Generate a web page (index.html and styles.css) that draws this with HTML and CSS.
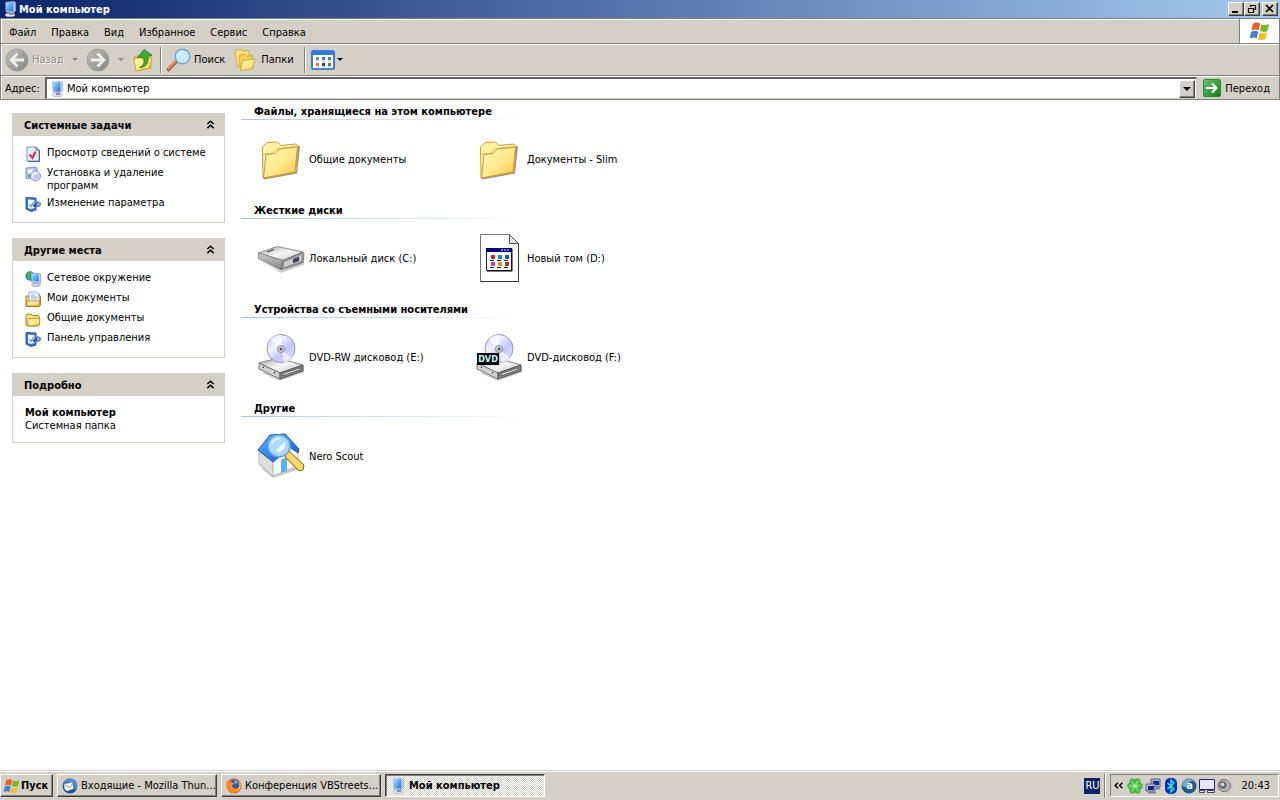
FILE: index.html
```html
<!DOCTYPE html>
<html lang="ru">
<head>
<meta charset="utf-8">
<title>Мой компьютер</title>
<link rel="stylesheet" href="styles.css">
</head>
<body>
<svg class="sprite" aria-hidden="true">
  <defs>
    <linearGradient id="g-screen" x1="0" y1="0" x2="1" y2="1"><stop offset="0" stop-color="#9be4ff"/><stop offset="1" stop-color="#1f6fe0"/></linearGradient>
    <linearGradient id="g-gray" x1="0" y1="0" x2="1" y2="1"><stop offset="0" stop-color="#c4c2bd"/><stop offset="1" stop-color="#85837f"/></linearGradient>
    <linearGradient id="g-folder" x1="0" y1="0" x2="1" y2="1"><stop offset="0" stop-color="#fff7b8"/><stop offset=".55" stop-color="#ffe98a"/><stop offset="1" stop-color="#f5bf3c"/></linearGradient>
    <linearGradient id="g-green" x1="0" y1="0" x2="1" y2="1"><stop offset="0" stop-color="#6cc46a"/><stop offset="1" stop-color="#0f7d1c"/></linearGradient>
    <linearGradient id="g-metal" x1="0" y1="0" x2="1" y2="1"><stop offset="0" stop-color="#a4a4a4"/><stop offset=".5" stop-color="#f6f6f6"/><stop offset="1" stop-color="#c4c4c4"/></linearGradient>
    <linearGradient id="g-side" x1="0" y1="0" x2="0" y2="1"><stop offset="0" stop-color="#d0d0d0"/><stop offset="1" stop-color="#808080"/></linearGradient>
    <linearGradient id="g-disc" x1="0" y1="0" x2="1" y2="1"><stop offset="0" stop-color="#c8c6f4"/><stop offset=".35" stop-color="#f0f2ff"/><stop offset=".6" stop-color="#c4c6f8"/><stop offset="1" stop-color="#e9e6fb"/></linearGradient>
    <linearGradient id="g-roof" x1="0" y1="0" x2="1" y2="1"><stop offset="0" stop-color="#62b4ff"/><stop offset="1" stop-color="#0b56c8"/></linearGradient>
    <linearGradient id="g-gold" x1="0" y1="1" x2="1" y2="0"><stop offset="0" stop-color="#b8740c"/><stop offset=".5" stop-color="#ffe070"/><stop offset="1" stop-color="#d89018"/></linearGradient>
  </defs>
  <symbol id="i-computer" viewBox="0 0 16 16">
    <ellipse cx="8" cy="14" rx="5" ry="1.800" fill="#e4e2f2" stroke="#a5a3c0" stroke-width=".6"/>
    <path d="M7 11h4v3H7z" fill="#8b8fb0"/>
    <path d="M3.500 1.200 11.600.2l2.100 1.400v8.200L11.500 12l-7.500-.8z" fill="#b4c6ea" stroke="#8c9fd0" stroke-width=".5"/>
    <path d="m4.200 2 7-.9v9.400l-6.700-.6z" fill="url(#g-screen)"/>
  </symbol>
  <symbol id="i-flag" viewBox="2 1 17 15">
    <path d="M4.500 2.500C7 .8 8.700 1.200 10.600 2.200L9.300 8C7.200 6.800 5.400 7 3.200 8.200z" fill="#ee5a24"/>
    <path d="M11.600 2.700c2.200 1 4.200 1 6.600-.2L16.800 8.500c-2.400 1.100-4.200 1-6.400.1z" fill="#79b928"/>
    <path d="M3 9.300c2.200-1.200 4-1.300 6-.2l-1.300 5.700c-2-1.200-3.900-1-6.100.2z" fill="#3f80dd"/>
    <path d="M10.100 9.700c2.200 1 4.100.9 6.500-.1l-1.400 5.800c-2.400 1.100-4.200 1.100-6.400.1z" fill="#f8bf1a"/>
  </symbol>
  <symbol id="i-back" viewBox="0 0 24 24">
    <circle cx="12" cy="12" r="11" fill="url(#g-gray)" stroke="#989690" stroke-width=".8"/>
    <path d="M12.500 5.500 6.200 12l6.300 6.500M6.500 12H19" fill="none" stroke="#f1f0ed" stroke-width="2.800"/>
  </symbol>
  <symbol id="i-forward" viewBox="0 0 24 24">
    <circle cx="12" cy="12" r="11" fill="url(#g-gray)" stroke="#989690" stroke-width=".8"/>
    <path d="M11.500 5.500 17.800 12l-6.300 6.500M17.500 12H5" fill="none" stroke="#f1f0ed" stroke-width="2.800"/>
  </symbol>
  <symbol id="i-up" viewBox="0 0 24 24">
    <path d="m3 10 1-1.500 5-.8 1.500 1.200 9-1 .5 12L5.500 23z" fill="#f1cf58" stroke="#c69a20" stroke-width=".8"/>
    <path d="m5 23-2-12 7-2 2 3 9-2.500L18.500 20z" fill="url(#g-folder)" stroke="#c69a20" stroke-width=".8"/>
    <path d="M8.500 19.500c4.500-1.500 5-5 4.300-10l-6.300.2L13 1.500l8 5.700-4 .9c.8 6.700-1.500 11.400-8.500 11.400z" fill="#3dad35" stroke="#1c7a1c" stroke-width=".8"/>
  </symbol>
  <symbol id="i-search" viewBox="0 0 24 24">
    <path d="m9.500 13-8 8.500" stroke="#a8583a" stroke-width="3.600" stroke-linecap="round"/><path d="m9 12.800-7.500 8" stroke="#e9a477" stroke-width="1.500" stroke-linecap="round"/>
    <circle cx="15.500" cy="8.500" r="7.300" fill="#c6eafd" stroke="#7b9dd3" stroke-width="1.400"/>
    <path d="M11 9.500c0-4 2.500-5.500 6-5-3 .8-4.500 2.500-6 5z" fill="#fff"/>
  </symbol>
  <symbol id="i-folders" viewBox="0 0 24 24">
    <path d="m2 4 1.200-2 5-.5L10 3.200l6-.7.700 13-12.500 3z" fill="#f8df7c" stroke="#caa032" stroke-width=".8"/>
    <path d="m6 9 1.200-2 5-.5L14 8.200l5.500-.7.700 12L7.500 22z" fill="#f3d05a" stroke="#caa032" stroke-width=".8"/>
    <path d="m7.500 22.500 2.200-9.700 12.300-2-2.500 10z" fill="url(#g-folder)" stroke="#caa032" stroke-width=".8"/>
  </symbol>
  <symbol id="i-views" viewBox="0 0 24 20">
    <rect x="1" y="1" width="22" height="18" rx="1" fill="#fff" stroke="#1260c8" stroke-width="1.600"/>
    <path d="M1 1h22v4H1z" fill="#2d7be2"/>
    <path d="M5 7h3v3H5z" fill="#8b8b98"/><path d="M11 7h3v3h-3z" fill="#4474d8"/><path d="M17 7h3v3h-3z" fill="#3d9148"/>
    <path d="M5 13h3v3H5z" fill="#e77838"/><path d="M11 13h3v3h-3z" fill="#273a9c"/><path d="M17 13h3v3h-3z" fill="#3a8f4a"/>
    <path d="M5 11h3M11 11h3M17 11h3M5 17h3M11 17h3M17 17h3" stroke="#999" stroke-width=".7"/>
  </symbol>
  <symbol id="i-go" viewBox="0 0 18 18">
    <rect x=".5" y=".5" width="17" height="17" rx="1" fill="url(#g-green)" stroke="#2c8a35"/>
    <path d="M3 9h10M9 4.500 13.500 9 9 13.500" fill="none" stroke="#fff" stroke-width="2"/>
  </symbol>
  <symbol id="i-chevrons" viewBox="0 0 8 8"><path d="m1.200 3.500 2.800-2.500 2.800 2.500M1.200 7.200l2.800-2.500 2.800 2.500" fill="none" stroke="#000" stroke-width="1.300"/></symbol>
  <symbol id="i-info" viewBox="0 0 16 16">
    <path d="M2 1h9l3 3v11H2z" fill="#e4eeff" stroke="#7c94c9"/><path d="M11 1v3h3M14.500 4v11.500H3" fill="none" stroke="#4d679d"/>
    <path d="m4.500 8.500 3 3.500 3-6.500" fill="none" stroke="#dd2d35" stroke-width="2"/>
  </symbol>
  <symbol id="i-install" viewBox="0 0 16 16">
    <path d="m1 2 9-1 2 1v9l-9 2-2-1z" fill="#b6c8ed" stroke="#6b82bb" stroke-width=".8"/><path d="M3 3.500h5v4H3z" fill="#f6fbff"/><path d="M3 8.500h3V11H3z" fill="#4ead54"/>
    <circle cx="10.500" cy="10" r="5" fill="url(#g-disc)" stroke="#8386bd" stroke-width=".8"/><circle cx="10.500" cy="10" r="1.300" fill="#fff" stroke="#8585b8" stroke-width=".6"/>
  </symbol>
  <symbol id="i-settings" viewBox="0 0 16 16">
    <path d="m1 1.500 10 .5v12l-5 1.500-5-2.500z" fill="#3b78cc" stroke="#173f85" stroke-width=".8"/><path d="m3 3.500 6.500.5v8L6 13l-3-1z" fill="#eaf5ff"/>
    <path d="m4.300 8 1.700 2.500L8.500 6" fill="none" stroke="#59a0dd" stroke-width="1.200"/><path d="m8 10 4-2" stroke="#244f91" stroke-width="2"/><path d="m12 5.500 3.500 1.500-.5 3-3.500.5z" fill="#8ab0e2" stroke="#315992" stroke-width=".8"/>
  </symbol>
  <symbol id="i-network" viewBox="0 0 16 16">
    <circle cx="5" cy="5" r="4.700" fill="#2b7fd8"/><path d="M1 3c2-3 4-2.500 6-2L5 4l2 3-3 2.500C2 8 2 5 1 3z" fill="#48ae45"/>
    <path d="m6 2 8.500.5 1.500 1-.5 8-2 1.500-7-2z" fill="#c3d1ed" stroke="#6a80b4" stroke-width=".6"/><path d="m6.700 3 7 .3v7.400l-6.500-1.200z" fill="url(#g-screen)"/>
    <ellipse cx="11" cy="14" rx="4.500" ry="1.700" fill="#d6d4ee" stroke="#8a89b6" stroke-width=".6"/>
  </symbol>
  <symbol id="i-mydocs" viewBox="0 0 16 16">
    <path d="M1 5h3l1-2h9l1.500 3v8l-1 1.500H1z" fill="#f6d26b" stroke="#ad8122"/><path d="M4 1h7l3 3v8H4z" fill="#f5faff" stroke="#7e99c5" stroke-width=".8"/>
    <path d="M6 4h4M6 6h6M6 8h6" stroke="#85aadb"/><path d="M2 10h13l-1 5H2z" fill="url(#g-folder)" stroke="#ad8122" stroke-width=".8"/>
  </symbol>
  <symbol id="i-shared" viewBox="0 0 16 16">
    <path d="M1 4.500 2 3h4l1.500 1.500H13L14.500 6v7.500L13 15H2.500L1 14z" fill="#f8df7c" stroke="#ad8122"/><path d="M3 15V7.500h12L14 14z" fill="url(#g-folder)" stroke="#b98d29" stroke-width=".8"/>
  </symbol>
  <symbol id="i-folder" viewBox="0 0 48 48">
    <path d="m7 44.500 33-6 3-27-2-1-2 26-33 6z" fill="#77736a" opacity=".8"/>
    <path d="m5.500 12 5-4.500 10-.5 3.500 3.500 15-1.500 2 2.500-2 26-33 5.500z" fill="#fff2a0" stroke="#c9a045"/>
    <path d="M6 19.500 15.500 18l4-4L39 11.500" fill="none" stroke="#e0bd5c"/>
    <path d="m6.500 43 2.500-23.500 9-1 4.500-4.500 18-2-2.500 25z" fill="url(#g-folder)" stroke="#c49b35"/>
  </symbol>
  <symbol id="i-drive" viewBox="0 0 48 48">
    <path d="m5 28 19 11 23-8v-4L24 37z" fill="#777" opacity=".35"/>
    <path d="m1.500 19 19-6.500L46 18l-20 8.500z" fill="url(#g-metal)" stroke="#8d8d8d"/>
    <path d="M1.500 19v5.500L24 36l2-9.500z" fill="url(#g-side)" stroke="#777" stroke-width=".8"/>
    <path d="M26 26.500 46 18l1 1.500-1 9L24 36z" fill="#97979c" stroke="#666" stroke-width=".8"/>
    <path d="m27.500 28 17-7-.5 6-17 6z" fill="#cbcbd0"/><path d="m36 25 6-2.500v4.500l-6 2.200z" fill="#45405f"/>
    <path d="m10 18 7-2.500" stroke="#444" stroke-width="1.300"/>
  </symbol>
  <symbol id="i-volume" viewBox="0 0 48 48">
    <path d="M5.500.5h29l9 9v38h-38z" fill="#fff" stroke="#777"/><path d="M34.500.5v9h9z" fill="#e5e5e5" stroke="#555"/><path d="M43.500 10v37.500H6" fill="none" stroke="#333"/>
    <path d="M11.500 14.500h25v22h-25z" fill="#fff" stroke="#222"/><path d="M11 14h26v4H11z" fill="#000078"/><path d="M26 16h9" stroke="#fff" stroke-dasharray="2 1"/><path d="M37 15v22H12" fill="none" stroke="#000"/>
    <path d="M16 21h4v4h-4zM30 28h4v4h-4z" fill="#c42b24"/><path d="M23 21h4v4h-4z" fill="#168cae"/><path d="M30 21h4v4h-4z" fill="#1654c2"/><path d="M16 28h4v4h-4z" fill="#ce35bd"/><path d="M23 28h4v4h-4z" fill="#c5961e"/>
    <path d="M15 26.500h4M22 26.500h4M29 26.500h4M15 33.500h4M22 33.500h4M29 33.500h4" stroke="#222"/>
  </symbol>
  <symbol id="i-dvd" viewBox="0 0 48 48">
    <path d="m5 40 18 8 24-9v-5z" fill="#777" opacity=".35"/>
    <path d="m2 30 19-5 25 7-23 8z" fill="url(#g-metal)" stroke="#888"/><path d="M2 30v6l21 10v-6z" fill="#d2d2d2" stroke="#777"/>
    <path d="m23 40 23-8v6l-23 8z" fill="#868686" stroke="#555"/><path d="m26 40.500 17-5.700v2l-17 6z" fill="#eee" stroke="#444" stroke-width=".8"/>
    <path d="m6 34 1 .5M17 39.500l1 .5" stroke="#333" stroke-width="1.500"/>
    <circle cx="24" cy="15.500" r="14" fill="url(#g-disc)" stroke="#9a9aa8"/>
    <path d="M24 16 13.500 6.500C17 2.500 21 2 24 2zM24 16l11 9c-2 2.500-5 4-8 4.500z" fill="#fff" opacity=".6"/>
    <circle cx="24" cy="16" r="3.500" fill="#d5d5df" stroke="#8b8b9b"/><circle cx="24" cy="16" r="1.500" fill="#545463"/>
  </symbol>
  <symbol id="i-nero" viewBox="0 0 48 48">
    <path d="m4 36 12 10 27-9-4-8z" fill="#777" opacity=".4"/>
    <path d="M2 19v13l14 12V30z" fill="#dededf" stroke="#bbb"/><path d="m16 30 18-13 7 3v14L16 44z" fill="#f7f7f7" stroke="#bbb"/><path d="m24 28 6-3v14l-6 2z" fill="#55b3f1"/>
    <path d="M1 18 13 3l15-1 14 15-1 4-8-6-17 15z" fill="url(#g-roof)" stroke="#1758b2"/>
    <path d="m28 22 4-3 15 14-1 5-4 1-13-13z" fill="url(#g-gold)" stroke="#946016"/>
    <circle cx="22" cy="14" r="11" fill="#b9e0fb" fill-opacity=".92" stroke="#67a7db" stroke-width="1.600"/><path d="M14 13c1-6 6-8 11-6-5 0-8 2-11 6zM19 18l9-8v6l-6 5z" fill="#e9faff"/>
  </symbol>
  <symbol id="i-mail" viewBox="0 0 16 16">
    <circle cx="8" cy="8" r="7.500" fill="#174c98"/><path d="M1 5c2-4 8-5 11-3 4 3 4 8 1 11 1-5-1-8-6-9z" fill="#4d94dc"/>
    <path d="m2 6 8-1.500 2 6L5 13 2.500 11z" fill="#fff" stroke="#bbb" stroke-width=".5"/><path d="m2.500 6.500 5.500 3 2.500-4" fill="none" stroke="#8b9aae"/>
  </symbol>
  <symbol id="i-fox" viewBox="0 0 16 16">
    <circle cx="8" cy="8" r="7.500" fill="#e06214"/><circle cx="8.500" cy="6.500" r="5" fill="#2859b5"/><path d="M8 2c2 0 4 1 4.500 3L9 6z" fill="#6cacf0"/>
    <path d="M1 3c2 1 3 0 5 1l3 2-3 1c0 4 5 5 8 1 0 4-3 7-7 7C2 15-1 9 1 3z" fill="#f48a1c"/><path d="M13 3c3 4 2 9-3 11 3-3 4-6 3-11z" fill="#ffd43a"/>
  </symbol>
  <symbol id="i-clover" viewBox="0 0 16 16">
    <g fill="#5cc853" stroke="#198a24" stroke-width=".6"><circle cx="5.500" cy="3.500" r="2.700"/><circle cx="10.500" cy="3.500" r="2.700"/><circle cx="12.700" cy="8" r="2.700"/><circle cx="10.500" cy="12.500" r="2.700"/><circle cx="5.500" cy="12.500" r="2.700"/><circle cx="3.300" cy="8" r="2.700"/></g>
    <circle cx="8" cy="8" r="3.500" fill="#5cc853"/><path d="m5 4 6 8M11 4l-6 8M4 8h8" stroke="#d9f9d2" stroke-width=".7"/>
  </symbol>
  <symbol id="i-lan" viewBox="0 0 16 16">
    <path d="M6 1h9v8H6z" fill="#a8aeca" stroke="#56608b"/><path d="M8 3h6v4H8z" fill="#17268c"/><path d="M1 6h9v7H1z" fill="#bcc1d8" stroke="#56608b"/><path d="M3 8h6v4H3z" fill="#17268c"/><path d="M3 14.500h8M11 10.500h4" stroke="#777" stroke-width="1.500"/>
  </symbol>
  <symbol id="i-bluetooth" viewBox="0 0 16 16"><rect x="2" y="0" width="12" height="16" rx="5" fill="#062ebd"/><path d="m4.500 5 6.500 6-3 3V2l3 3-6.500 6" fill="none" stroke="#35f0d2" stroke-width="1.300"/></symbol>
  <symbol id="i-ball" viewBox="0 0 16 16"><circle cx="8" cy="8" r="7.500" fill="#205b87"/><path d="M1 7c1-7 9-8 13-3-4-2-8 1-7 4-3 2-5 1-6-1z" fill="#72a8c8"/></symbol>
  <symbol id="i-monitor" viewBox="0 0 16 16"><path d="M.5 1.500h15v10H.5z" fill="#e6e9f5" stroke="#20207c"/><path d="M.5 12.500h5v2h-5zM8.500 12.500h7v2h-7z" fill="#eee" stroke="#44445f"/></symbol>
  <symbol id="i-volumectl" viewBox="0 0 16 16"><circle cx="7" cy="7.500" r="6" fill="#bfbfbf" stroke="#666"/><circle cx="6" cy="7" r="3.800" fill="#6a6a6a"/><circle cx="5.500" cy="6.500" r="1.800" fill="#ddd"/><path d="M14 5c2 4 0 7-4 9.500" fill="none" stroke="#aaa"/></symbol>
</svg>

<header class="titlebar">
  <svg class="icon16"><use href="#i-computer"/></svg>
  <h1 class="titlebar-text">Мой компьютер</h1>
  <div class="window-buttons">
    <button class="wbtn" aria-label="Свернуть"><svg viewBox="0 0 12 10"><path d="M2 8h6" stroke="#000" stroke-width="2"/></svg></button>
    <button class="wbtn" aria-label="Восстановить"><svg viewBox="0 0 12 10"><path d="M4.500 3V1.500h5v4H8M4 1.500h6M2.500 4.500h5v4h-5zM2 4.500h6" fill="none" stroke="#000" stroke-width="1.200"/></svg></button>
    <button class="wbtn wbtn-close" aria-label="Закрыть"><svg viewBox="0 0 12 10"><path d="m2 1 7 7M9 1 2 8" stroke="#000" stroke-width="1.600"/></svg></button>
  </div>
</header>

<nav class="menubar">
  <div class="menus">
    <button class="menu">Файл</button><button class="menu">Правка</button><button class="menu">Вид</button><button class="menu">Избранное</button><button class="menu">Сервис</button><button class="menu">Справка</button>
  </div>
  <div class="brand"><svg class="flag"><use href="#i-flag"/></svg></div>
</nav>

<div class="toolbar">
  <button class="tool tool-back" disabled><svg class="icon24"><use href="#i-back"/></svg>Назад<i class="arrow"></i></button>
  <button class="tool tool-forward" disabled aria-label="Вперед"><svg class="icon24"><use href="#i-forward"/></svg><i class="arrow"></i></button>
  <button class="tool" aria-label="Вверх"><svg class="icon24"><use href="#i-up"/></svg></button>
  <span class="separator"></span>
  <button class="tool"><svg class="icon24"><use href="#i-search"/></svg>Поиск</button>
  <button class="tool tool-folders"><svg class="icon24"><use href="#i-folders"/></svg>Папки</button>
  <span class="separator"></span>
  <button class="tool tool-views" aria-label="Вид"><svg class="views-icon"><use href="#i-views"/></svg><i class="arrow"></i></button>
</div>

<form class="addressbar">
  <label class="address-label" for="address">Адрес:</label>
  <div class="address-box">
    <svg class="icon16"><use href="#i-computer"/></svg>
    <input class="address-input" id="address" type="text" value="Мой компьютер">
    <button class="address-drop" type="button" aria-label="Открыть список"><i class="arrow"></i></button>
  </div>
  <button class="go" type="button"><svg class="go-icon"><use href="#i-go"/></svg>Переход</button>
</form>

<div class="content">
  <aside class="sidebar">
    <section class="panel">
      <h2 class="panel-head">Системные задачи<button class="collapse" aria-label="Свернуть"><svg><use href="#i-chevrons"/></svg></button></h2>
      <div class="panel-body">
        <a class="task" href="#"><svg class="icon16"><use href="#i-info"/></svg><span>Просмотр сведений о системе</span></a>
        <a class="task" href="#"><svg class="icon16"><use href="#i-install"/></svg><span>Установка и удаление<br>программ</span></a>
        <a class="task" href="#"><svg class="icon16"><use href="#i-settings"/></svg><span>Изменение параметра</span></a>
      </div>
    </section>
    <section class="panel">
      <h2 class="panel-head">Другие места<button class="collapse" aria-label="Свернуть"><svg><use href="#i-chevrons"/></svg></button></h2>
      <div class="panel-body">
        <a class="task" href="#"><svg class="icon16"><use href="#i-network"/></svg><span>Сетевое окружение</span></a>
        <a class="task" href="#"><svg class="icon16"><use href="#i-mydocs"/></svg><span>Мои документы</span></a>
        <a class="task" href="#"><svg class="icon16"><use href="#i-shared"/></svg><span>Общие документы</span></a>
        <a class="task" href="#"><svg class="icon16"><use href="#i-settings"/></svg><span>Панель управления</span></a>
      </div>
    </section>
    <section class="panel">
      <h2 class="panel-head">Подробно<button class="collapse" aria-label="Свернуть"><svg><use href="#i-chevrons"/></svg></button></h2>
      <div class="panel-body details"><strong>Мой компьютер</strong><span>Системная папка</span></div>
    </section>
  </aside>

  <main class="files">
    <section class="group">
      <h2 class="group-head">Файлы, хранящиеся на этом компьютере</h2>
      <div class="items">
        <a class="item" href="#"><svg class="icon48"><use href="#i-folder"/></svg>Общие документы</a>
        <a class="item" href="#"><svg class="icon48"><use href="#i-folder"/></svg>Документы - Slim</a>
      </div>
    </section>
    <section class="group">
      <h2 class="group-head">Жесткие диски</h2>
      <div class="items">
        <a class="item" href="#"><svg class="icon48"><use href="#i-drive"/></svg>Локальный диск (C:)</a>
        <a class="item" href="#"><svg class="icon48"><use href="#i-volume"/></svg>Новый том (D:)</a>
      </div>
    </section>
    <section class="group">
      <h2 class="group-head">Устройства со съемными носителями</h2>
      <div class="items">
        <a class="item" href="#"><svg class="icon48"><use href="#i-dvd"/></svg>DVD-RW дисковод (E:)</a>
        <a class="item" href="#"><span class="disc"><svg class="icon48"><use href="#i-dvd"/></svg><b class="dvd-badge">DVD</b></span>DVD-дисковод (F:)</a>
      </div>
    </section>
    <section class="group">
      <h2 class="group-head">Другие</h2>
      <div class="items">
        <a class="item" href="#"><svg class="icon48"><use href="#i-nero"/></svg>Nero Scout</a>
      </div>
    </section>
  </main>
</div>

<footer class="taskbar">
  <button class="start"><svg class="icon16"><use href="#i-flag"/></svg>Пуск</button>
  <button class="window-tab"><svg class="icon16"><use href="#i-mail"/></svg><span>Входящие - Mozilla Thun...</span></button>
  <button class="window-tab"><svg class="icon16"><use href="#i-fox"/></svg><span>Конференция VBStreets...</span></button>
  <button class="window-tab active"><svg class="icon16"><use href="#i-computer"/></svg><span>Мой компьютер</span></button>
  <span class="lang">RU</span>
  <span class="tray-divider"></span>
  <div class="tray">
    <button class="tray-more" aria-label="Показать значки"><svg viewBox="0 0 8 6"><path d="M3.500.5 1 3l2.500 2.500M7.500.5 5 3l2.500 2.500" fill="none" stroke="#000" stroke-width="1.300"/></svg></button>
    <svg class="icon16"><use href="#i-clover"/></svg>
    <svg class="icon16"><use href="#i-lan"/></svg>
    <svg class="icon16"><use href="#i-bluetooth"/></svg>
    <span class="ball"><svg class="icon16"><use href="#i-ball"/></svg><b class="ball-letter">a</b></span>
    <svg class="icon16"><use href="#i-monitor"/></svg>
    <svg class="icon16"><use href="#i-volumectl"/></svg>
    <time class="clock">20:43</time>
  </div>
</footer>
</body>
</html>
```
FILE: styles.css
```css
* { box-sizing: border-box; }
body {
  margin: 0;
  height: 100vh;
  display: flex;
  flex-direction: column;
  background: #fff;
  color: #000;
  font: 11px/13px Tahoma, "DejaVu Sans Condensed", "DejaVu Sans", sans-serif;
  overflow: hidden;
}
button, input { font: inherit; color: inherit; border: 0; padding: 0; margin: 0; background: none; }
a { color: inherit; text-decoration: none; }
h1, h2 { margin: 0; font-size: 11px; }
svg { flex: none; display: block; }
.sprite { position: absolute; width: 0; height: 0; }
.icon16 { width: 16px; height: 16px; }
.icon24 { width: 24px; height: 24px; }
.icon48 { width: 48px; height: 48px; }
.arrow { border: 3px solid transparent; border-top-color: currentColor; border-bottom: 0; }

.titlebar { flex: none; display: flex; align-items: center; gap: 1px; height: 18px; padding: 0 2px; background: linear-gradient(90deg, #0a246a, #a6caf0); color: #fff; }
.window-buttons { display: flex; margin-left: auto; }
.wbtn, .address-drop, .start, .window-tab { background: #d4d0c8; border: 1px solid; border-color: #fff #404040 #404040 #fff; box-shadow: inset -1px -1px #808080; }
.wbtn { width: 16px; height: 14px; padding: 1px; }
.wbtn svg { width: 12px; height: 10px; }
.wbtn-close { margin-left: 2px; }

.menubar, .toolbar, .addressbar { flex: none; display: flex; background: #d4d0c8; border-left: 1px solid #808080; border-right: 1px solid #808080; box-shadow: inset 1px 1px #fff; }
.menubar { height: 26px; border-top: 1px solid #808080; border-bottom: 1px solid #808080; }
.menus { flex: 1; display: flex; align-items: center; gap: 15px; padding: 2px 0 0 8px; border-right: 1px solid #808080; }
.brand { width: 39px; display: grid; place-items: center; background: #fff; }
.flag { width: 20px; height: 18px; }

.toolbar { height: 32px; align-items: center; padding-left: 4px; border-bottom: 1px solid #808080; }
.tool { display: flex; align-items: center; gap: 3px; }
.tool:disabled { color: #8b8880; text-shadow: 1px 1px #fff; }
.tool-back { width: 81px; }
.tool-back .arrow { margin-left: 5px; }
.tool-forward { width: 45px; }
.tool-forward .arrow { margin-left: 5px; }
.tool-folders { margin-left: 8px; }
.tool-folders .icon24 { margin-right: 1px; }
.separator { width: 2px; height: 26px; margin: 0 5px; border-left: 1px solid #808080; border-right: 1px solid #fff; }
.tool-folders + .separator { margin-left: 10px; }
.tool-views { gap: 2px; }
.views-icon { width: 24px; height: 20px; }

.addressbar { height: 24px; align-items: center; padding: 1px 9px 0 4px; border-bottom: 1px solid #808080; }
.address-label { width: 40px; }
.address-box { flex: 1; display: flex; align-items: center; height: 22px; padding: 1px 1px 1px 2px; background: #fff; border: 1px solid #606060; border-width: 2px 1px 1px 2px; border-right-color: #d4d0c8; border-bottom-color: #d4d0c8; }
.address-input { flex: 1; min-width: 0; margin-left: 2px; outline: 0; }
.address-drop { width: 16px; height: 18px; display: grid; place-items: center; }
.address-drop .arrow { border-width: 4px 4px 0; }
.go { display: flex; align-items: center; gap: 4px; margin-left: 6px; }
.go-icon { width: 18px; height: 18px; }

.content { flex: 1; min-height: 0; display: flex; gap: 16px; padding-left: 12px; }
.sidebar { flex: none; width: 213px; padding-top: 13px; display: flex; flex-direction: column; gap: 15px; }
.panel { border: 1px solid #d4d0c8; }
.panel-head { display: flex; align-items: center; justify-content: space-between; height: 22px; padding: 1px 9px 0 11px; background: #d4d0c8; }
.collapse svg { width: 9px; height: 9px; margin-bottom: 2px; }
.panel-body { display: flex; flex-direction: column; gap: 4px; padding: 10px 12px; }
.task { display: flex; gap: 6px; min-height: 16px; }
.task .icon16 { margin-bottom: -4px; }
.details { gap: 0; }

.files { flex: 1; min-width: 0; padding-top: 4px; }
.group { height: 99px; }
.group-head { height: 16px; padding: 1px 0 0 13px; background: linear-gradient(90deg, #a5c5e8, #fff) left bottom / 290px 1px no-repeat; }
.items { display: flex; padding: 15px 0 0 16px; }
.item { display: flex; align-items: center; gap: 4px; width: 218px; }
.disc { position: relative; }
.dvd-badge { position: absolute; left: 2px; top: 20px; width: 22px; height: 12px; background: #000; color: #c8fff8; font-size: 9px; line-height: 12px; text-align: center; }

.taskbar { flex: none; display: flex; align-items: center; gap: 4px; height: 30px; padding: 1px 1px 0 0; background: #d4d0c8; box-shadow: inset 0 1px #d4d0c8, inset 0 2px #fff; }
.start { display: flex; align-items: center; gap: 1px; width: 53px; height: 23px; padding-left: 3px; font-weight: bold; }
.window-tab { display: flex; align-items: center; gap: 3px; width: 160px; height: 23px; padding: 0 4px; white-space: nowrap; overflow: hidden; }
.window-tab.active { font-weight: bold; border-color: #404040 #fff #fff #404040; box-shadow: inset 1px 1px #808080; background: repeating-conic-gradient(#fff 0 25%, #d4d0c8 0 50%) 0 0 / 2px 2px; }
.lang { margin-left: auto; width: 16px; height: 16px; background: #0a246a; color: #fff; line-height: 16px; text-align: center; }
.tray-divider { width: 2px; height: 24px; border-left: 1px solid #808080; border-right: 1px solid #fff; }
.tray { display: flex; align-items: center; gap: 2px; height: 23px; padding: 0 8px 0 3px; border: 1px solid; border-color: #808080 #fff #fff #808080; }
.tray-more { margin-right: 2px; }
.tray-more svg { width: 9px; height: 7px; }
.ball { position: relative; }
.ball-letter { position: absolute; inset: 0; color: #fff; line-height: 15px; text-align: center; }
.clock { margin-left: 6px; }
```
